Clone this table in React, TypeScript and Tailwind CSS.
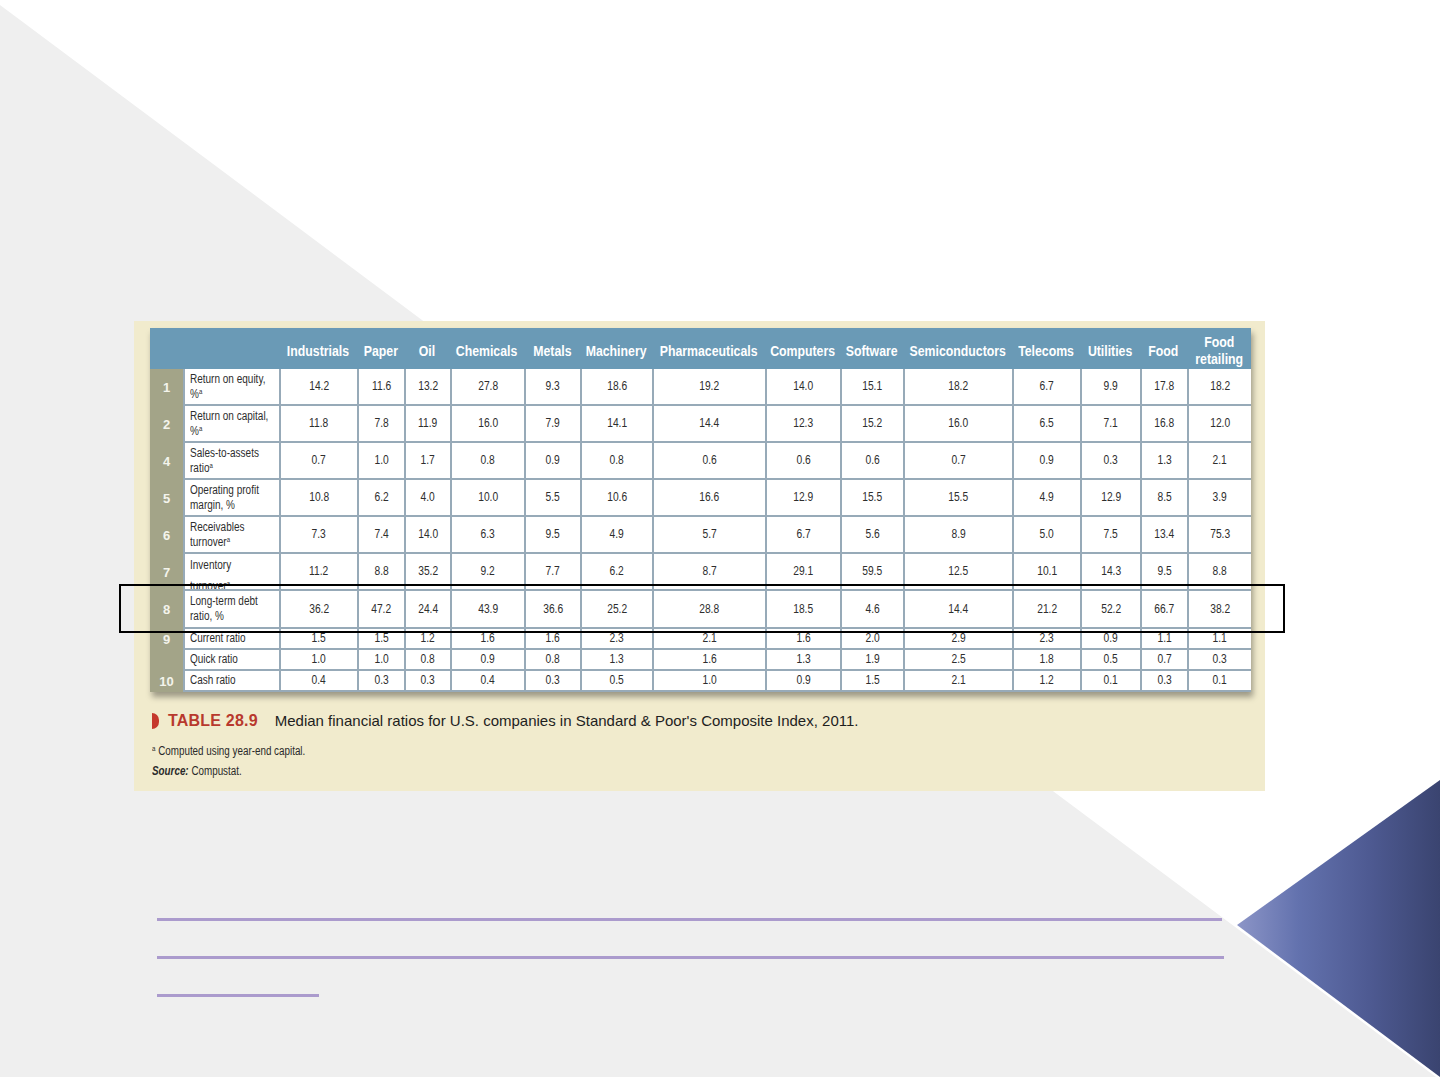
import React from "react";

type Row = {
  num: string;
  label: React.ReactNode;
  values: string[];
  clip?: boolean;
};

const headers = [
  "Industrials",
  "Paper",
  "Oil",
  "Chemicals",
  "Metals",
  "Machinery",
  "Pharmaceuticals",
  "Computers",
  "Software",
  "Semiconductors",
  "Telecoms",
  "Utilities",
  "Food",
  "Food retailing",
];

const Sup = () => <span className="relative -top-[4px] text-[7.5px] leading-none">a</span>;

const rows: Row[] = [
  {
    num: "1",
    label: (
      <>
        Return on equity,
        <br />%<Sup />
      </>
    ),
    values: ["14.2", "11.6", "13.2", "27.8", "9.3", "18.6", "19.2", "14.0", "15.1", "18.2", "6.7", "9.9", "17.8", "18.2"],
  },
  {
    num: "2",
    label: (
      <>
        Return on capital,
        <br />%<Sup />
      </>
    ),
    values: ["11.8", "7.8", "11.9", "16.0", "7.9", "14.1", "14.4", "12.3", "15.2", "16.0", "6.5", "7.1", "16.8", "12.0"],
  },
  {
    num: "4",
    label: (
      <>
        Sales-to-assets
        <br />
        ratio<Sup />
      </>
    ),
    values: ["0.7", "1.0", "1.7", "0.8", "0.9", "0.8", "0.6", "0.6", "0.6", "0.7", "0.9", "0.3", "1.3", "2.1"],
  },
  {
    num: "5",
    label: (
      <>
        Operating profit
        <br />
        margin, %
      </>
    ),
    values: ["10.8", "6.2", "4.0", "10.0", "5.5", "10.6", "16.6", "12.9", "15.5", "15.5", "4.9", "12.9", "8.5", "3.9"],
  },
  {
    num: "6",
    label: (
      <>
        Receivables
        <br />
        turnover<Sup />
      </>
    ),
    values: ["7.3", "7.4", "14.0", "6.3", "9.5", "4.9", "5.7", "6.7", "5.6", "8.9", "5.0", "7.5", "13.4", "75.3"],
  },
  {
    num: "7",
    label: (
      <>
        Inventory
        <br />
        turnover<Sup />
      </>
    ),
    values: ["11.2", "8.8", "35.2", "9.2", "7.7", "6.2", "8.7", "29.1", "59.5", "12.5", "10.1", "14.3", "9.5", "8.8"],
    clip: true,
  },
  {
    num: "8",
    label: (
      <>
        Long-term debt
        <br />
        ratio, %
      </>
    ),
    values: ["36.2", "47.2", "24.4", "43.9", "36.6", "25.2", "28.8", "18.5", "4.6", "14.4", "21.2", "52.2", "66.7", "38.2"],
  },
  {
    num: "9",
    label: "Current ratio",
    values: ["1.5", "1.5", "1.2", "1.6", "1.6", "2.3", "2.1", "1.6", "2.0", "2.9", "2.3", "0.9", "1.1", "1.1"],
  },
  {
    num: "",
    label: "Quick ratio",
    values: ["1.0", "1.0", "0.8", "0.9", "0.8", "1.3", "1.6", "1.3", "1.9", "2.5", "1.8", "0.5", "0.7", "0.3"],
  },
  {
    num: "10",
    label: "Cash ratio",
    values: ["0.4", "0.3", "0.3", "0.4", "0.3", "0.5", "1.0", "0.9", "1.5", "2.1", "1.2", "0.1", "0.3", "0.1"],
  },
];

function Background() {
  return (
    <svg className="absolute inset-0" width="1440" height="1080" viewBox="0 0 1440 1080">
      <defs>
        <linearGradient id="navy" x1="1237" y1="0" x2="1440" y2="0" gradientUnits="userSpaceOnUse">
          <stop offset="0" stopColor="#8c95c7" />
          <stop offset="0.3" stopColor="#6372ae" />
          <stop offset="0.65" stopColor="#4e5a92" />
          <stop offset="1" stopColor="#3a4470" />
        </linearGradient>
      </defs>
      <polygon points="0,5 1436,1077 0,1077" fill="#efefef" />
      <polygon points="1237,925 1440,780 1440,1077" fill="url(#navy)" />
    </svg>
  );
}

export default function App() {
  return (
    <div className="relative w-[1440px] h-[1080px] overflow-hidden bg-white font-['Liberation_Sans',Arial,sans-serif]">
      <Background />

      <div className="relative flex flex-col pt-[321px] pl-[134px]">
        {/* Beige figure panel */}
        <div className="w-[1131px] h-[470px] bg-[#f1ebcd] pl-[16px] pt-[7px] flex flex-col">
          <div className="w-[1101px] shadow-[2px_5px_6px_rgba(0,0,0,0.35)] grid grid-cols-[33px_96px_78px_47px_46px_74px_56px_72px_113px_75px_63px_109px_68px_60px_47px_64px] grid-rows-[41px_37px_37px_37px_37px_37px_37px_38px_21px_21px_21px]">
            <div className="bg-[#6a9ab6]" />
            <div className="bg-[#6a9ab6]" />
            {headers.map((h) => (
              <div
                key={h}
                className="bg-[#6a9ab6] flex items-center justify-center pt-[3px] text-center text-white font-bold text-[15px] leading-[17px]"
              >
                <span className="inline-block whitespace-nowrap scale-x-[0.82] origin-center">
                  {h === "Food retailing" ? (
                    <>
                      Food
                      <br />
                      retailing
                    </>
                  ) : (
                    h
                  )}
                </span>
              </div>
            ))}

            {rows.map((r, i) => (
              <React.Fragment key={i}>
                <div className="bg-[#a3a488] flex items-center justify-center text-[#f4f4ec] font-bold text-[13px]">
                  {r.num}
                </div>
                {r.clip ? (
                  <div className="bg-white border-l-2 border-b-2 border-[#97aab8] pl-[5px] pt-[1px] overflow-hidden text-[12.5px] leading-[21px] text-[#2e2e2e]">
                    <span className="inline-block whitespace-nowrap scale-x-[0.8] origin-left">{r.label}</span>
                  </div>
                ) : (
                  <div className="bg-white border-l-2 border-b-2 border-[#97aab8] flex items-center pl-[5px] text-[12.5px] leading-[15px] text-[#2e2e2e]">
                    <span className="inline-block whitespace-nowrap scale-x-[0.8] origin-left">{r.label}</span>
                  </div>
                )}
                {r.values.map((v, j) => (
                  <div
                    key={j}
                    className="bg-white border-l-2 border-b-2 border-[#97aab8] flex items-center justify-center text-[12.5px] text-[#2e2e2e]"
                  >
                    <span className="inline-block scale-x-[0.82] origin-center">{v}</span>
                  </div>
                ))}
              </React.Fragment>
            ))}
          </div>

          {/* Caption */}
          <div className="mt-[20px] flex items-center h-[18px] pl-[2px]">
            <div className="w-[7px] h-[16px] rounded-r-full bg-[#c5382c]" />
            <span className="ml-[9px] text-[16px] font-bold text-[#b8392d] tracking-[0.2px]">TABLE 28.9</span>
            <span className="ml-[17px] text-[15px] text-[#1e1e1e]">
              Median financial ratios for U.S. companies in Standard &amp; Poor's Composite Index, 2011.
            </span>
          </div>

          {/* Footnotes */}
          <div className="mt-[11px] pl-[2px] text-[12px] leading-[20px] text-[#2a2a2a]">
            <div>
              <span className="inline-block whitespace-nowrap scale-x-[0.82] origin-left">
                <span className="relative -top-[4px] text-[7.5px] leading-none">a</span> Computed using year-end capital.
              </span>
            </div>
            <div>
              <span className="inline-block whitespace-nowrap scale-x-[0.82] origin-left">
                <span className="font-bold italic">Source:</span> Compustat.
              </span>
            </div>
          </div>
        </div>

        {/* Purple rule lines */}
        <div className="ml-[23px] mt-[127px] flex flex-col gap-[35px]">
          <div className="w-[1065px] h-[3px] bg-[#ab9bcd]" />
          <div className="w-[1067px] h-[3px] bg-[#ab9bcd]" />
          <div className="w-[162px] h-[3px] bg-[#ab9bcd]" />
        </div>
      </div>

      {/* Highlight rectangle around row 8 */}
      <div className="absolute left-[119px] top-[584px] w-[1166px] h-[49px] border-2 border-black" />
    </div>
  );
}
